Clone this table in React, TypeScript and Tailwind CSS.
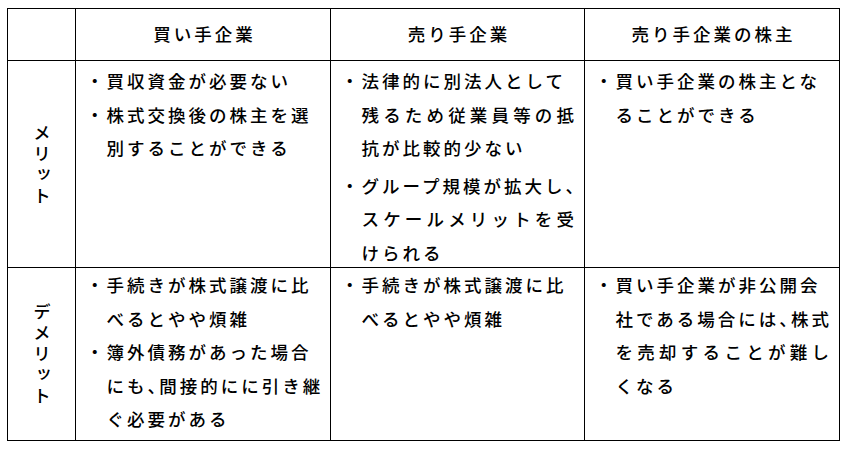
import React from "react";

type Line = { t: React.ReactNode; j?: boolean };
type Item = { lines: Line[]; gap?: boolean };

const Comma = () => <span className="[font-feature-settings:'halt']">、</span>;

function Cell({ items, top }: { items: Item[]; top: string }) {
  return (
    <div className={`border-r border-b border-black pl-[10px] pr-[7px] ${top}`}>
      {items.map((it, i) => (
        <div key={i} className={`flex ${it.gap ? "mt-[4px]" : ""}`}>
          <span className="w-[20.5px] shrink-0 leading-[33.5px]">・</span>
          <div className="min-w-0 flex-1">
            {it.lines.map((l, k) =>
              l.j ? (
                <div key={k} className="leading-[33.5px] text-justify [text-align-last:justify]">
                  {l.t}
                </div>
              ) : (
                <div key={k} className="whitespace-nowrap leading-[33.5px]">
                  {l.t}
                </div>
              )
            )}
          </div>
        </div>
      ))}
    </div>
  );
}

function Head({ text }: { text: string }) {
  return (
    <div className="flex items-center justify-center border-r border-b border-black pl-[3px]">
      {text}
    </div>
  );
}

function Label({ text }: { text: string }) {
  return (
    <div className="flex items-center justify-center border-r border-b border-black">
      <div className="[writing-mode:vertical-rl] [text-orientation:upright] tracking-[3.5px] leading-[24px] pt-[3.5px]">
        {text}
      </div>
    </div>
  );
}

export default function App() {
  return (
    <div className="min-h-screen bg-white pt-[8px] pl-[7px] text-black font-['Noto_Sans_CJK_JP',sans-serif] text-[17.5px] font-medium tracking-[3px]">
      <div className="grid w-[833px] grid-cols-[68px_255px_254px_255px] grid-rows-[52px_207px_173px] border-l border-t border-black">
        <div className="border-r border-b border-black" />
        <Head text="買い手企業" />
        <Head text="売り手企業" />
        <Head text="売り手企業の株主" />

        <Label text="メリット" />
        <Cell
          top="pt-[3px]"
          items={[
            { lines: [{ t: "買収資金が必要ない" }] },
            { lines: [{ t: "株式交換後の株主を選" }, { t: "別することができる" }] },
          ]}
        />
        <Cell
          top="pt-[3px]"
          items={[
            {
              lines: [
                { t: "法律的に別法人として" },
                { t: "残るため従業員等の抵", j: true },
                { t: "抗が比較的少ない" },
              ],
            },
            {
              gap: true,
              lines: [
                { t: "グループ規模が拡大し、" },
                { t: "スケールメリットを受", j: true },
                { t: "けられる" },
              ],
            },
          ]}
        />
        <Cell
          top="pt-[3px]"
          items={[{ lines: [{ t: "買い手企業の株主とな" }, { t: "ることができる" }] }]}
        />

        <Label text="デメリット" />
        <Cell
          top="pt-0"
          items={[
            { lines: [{ t: "手続きが株式譲渡に比" }, { t: "べるとやや煩雑" }] },
            {
              lines: [
                { t: "簿外債務があった場合" },
                {
                  t: (
                    <>
                      にも<Comma />間接的にに引き継
                    </>
                  ),
                },
                { t: "ぐ必要がある" },
              ],
            },
          ]}
        />
        <Cell
          top="pt-0"
          items={[{ lines: [{ t: "手続きが株式譲渡に比" }, { t: "べるとやや煩雑" }] }]}
        />
        <Cell
          top="pt-0"
          items={[
            {
              lines: [
                { t: "買い手企業が非公開会" },
                {
                  t: (
                    <>
                      社である場合には<Comma />株式
                    </>
                  ),
                },
                { t: "を売却することが難し", j: true },
                { t: "くなる" },
              ],
            },
          ]}
        />
      </div>
    </div>
  );
}
